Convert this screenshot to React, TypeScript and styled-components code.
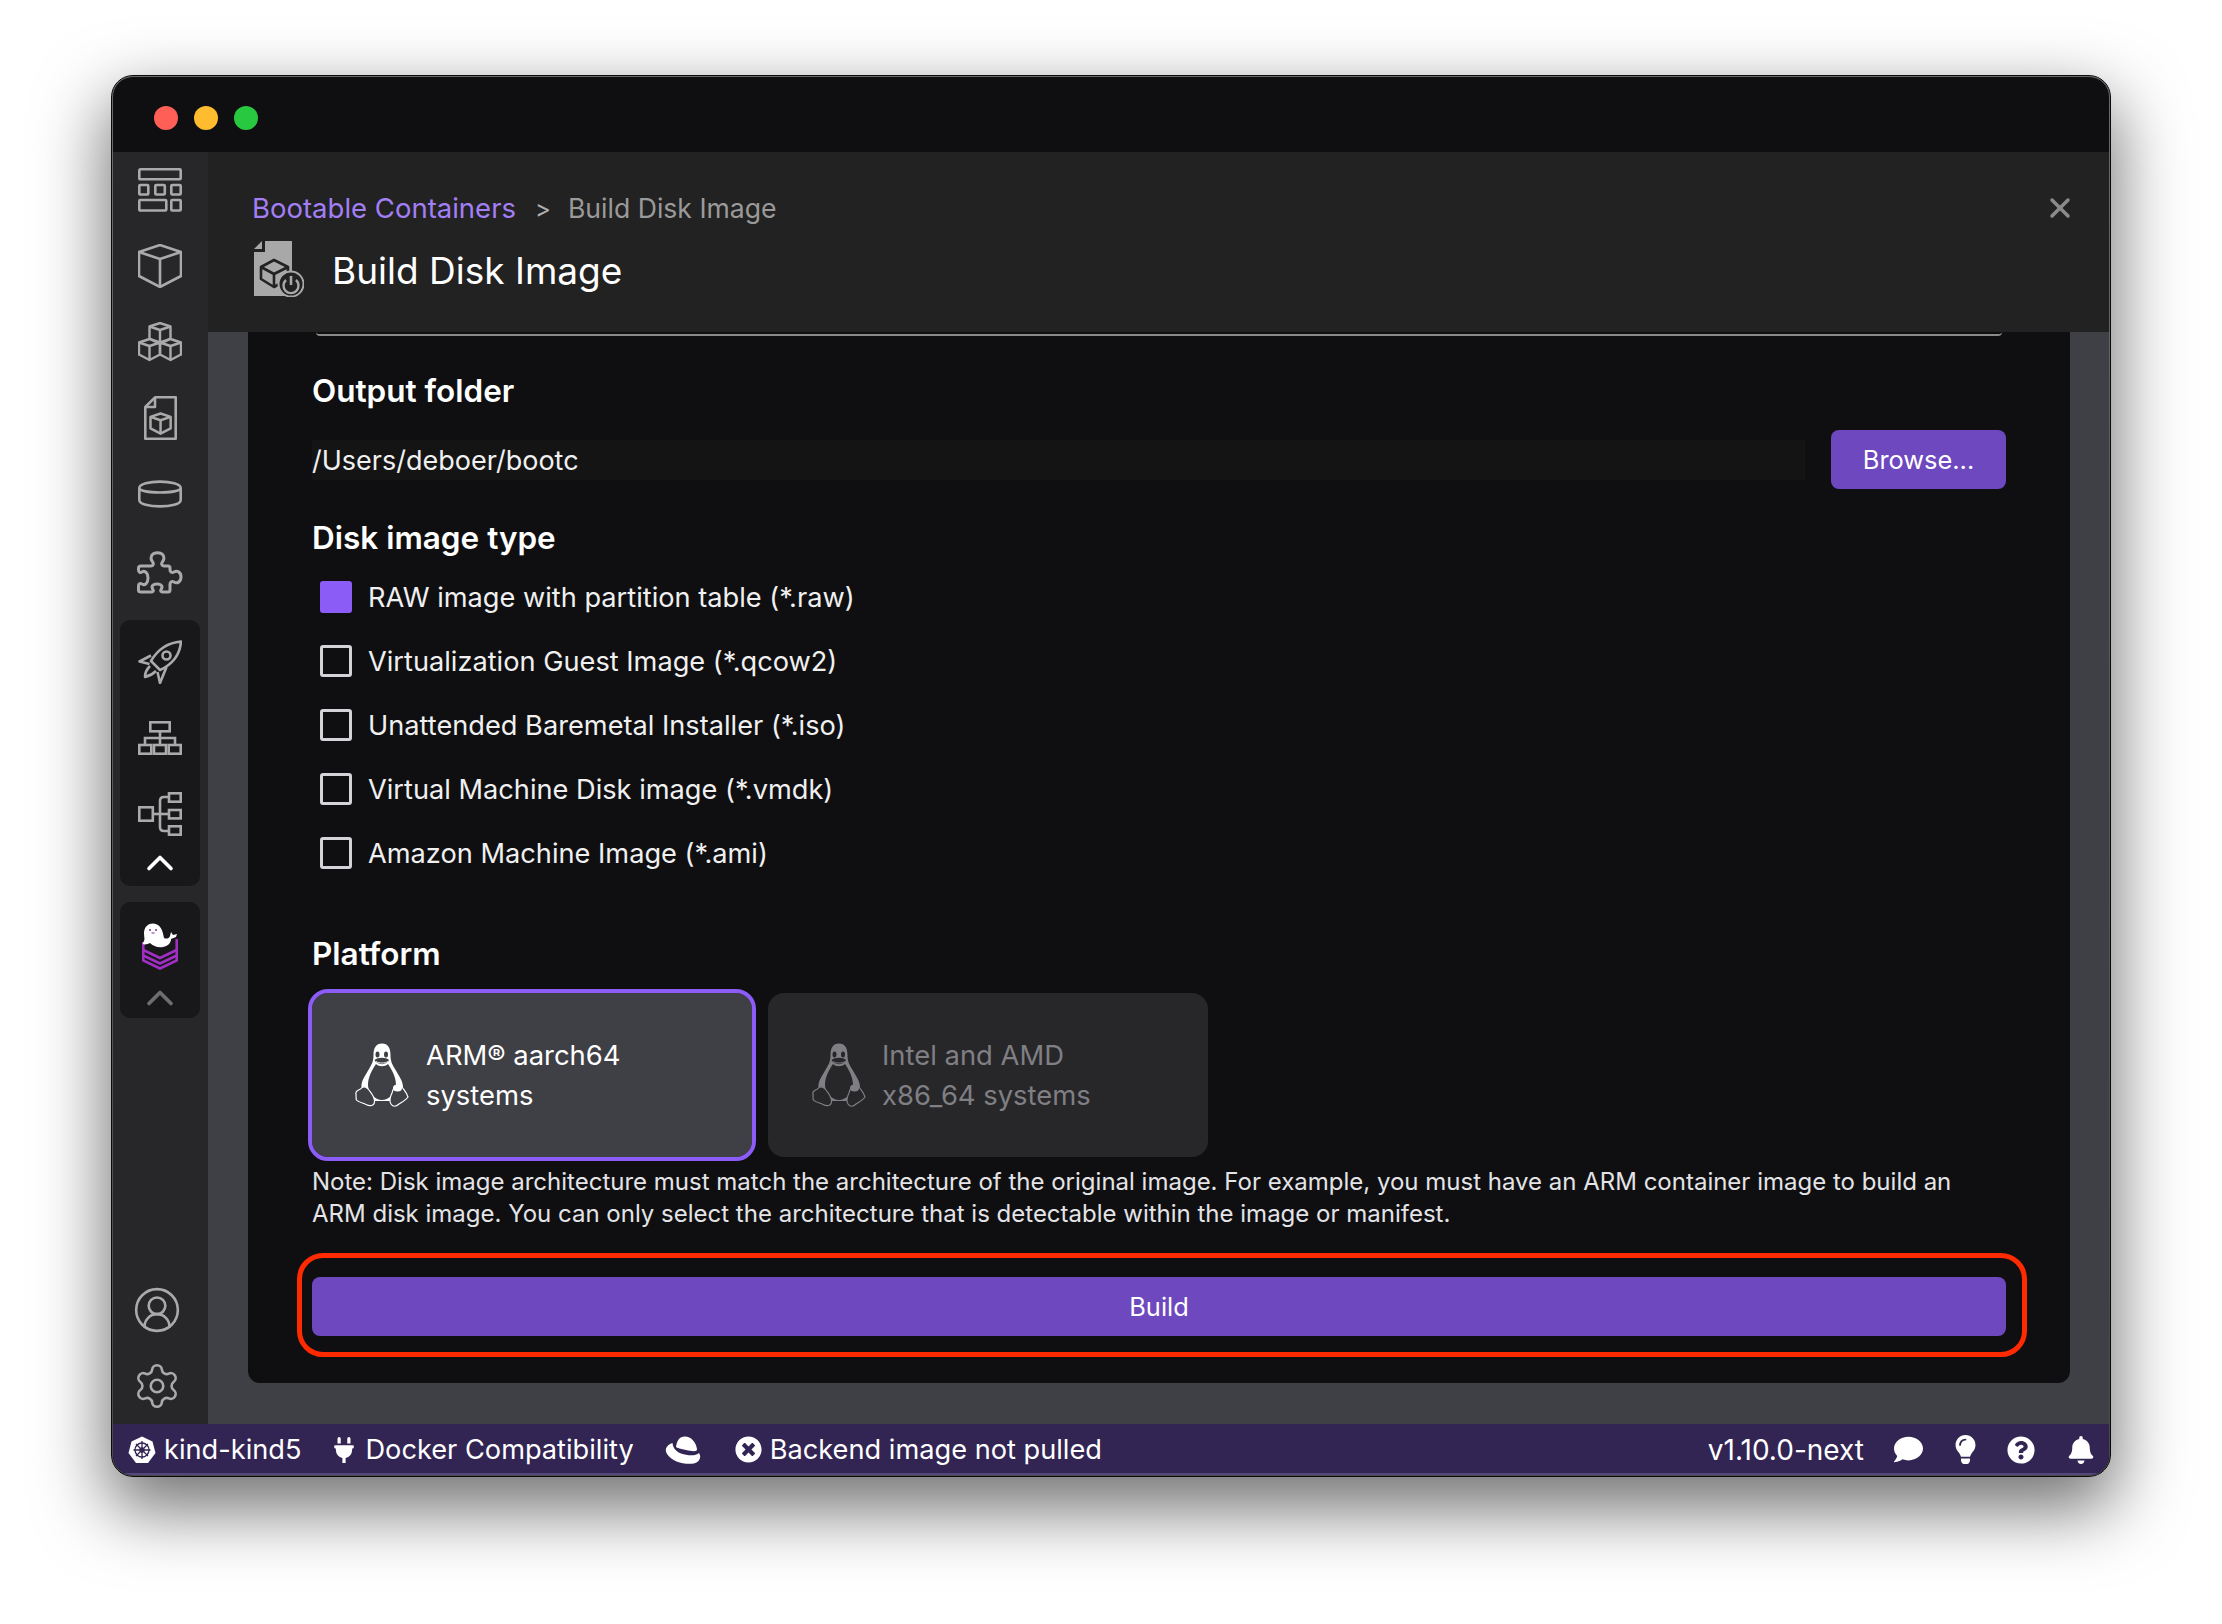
import React from "react";
import styled, { createGlobalStyle } from "styled-components";
import { Settings, CircleUserRound, ChevronUp, X } from "lucide-react";
import { FaBell, FaComment, FaLightbulb, FaPlug, FaQuestionCircle, FaTimesCircle } from "react-icons/fa";

const GlobalStyle = createGlobalStyle`
  html, body {
    margin: 0;
    background: #fff;
    font-family: Inter, "Noto Sans", sans-serif;
  }
  body {
    width: 2222px;
    height: 1624px;
    overflow: hidden;
  }
  * { box-sizing: border-box; }
`;

const Page = styled.div`
  padding: 75px 0 0 111px;
`;

const Window = styled.div`
  width: 2000px;
  height: 1402px;
  padding: 1px;
  border: 1px solid #0a0a0a;
  border-radius: 22px;
  background: linear-gradient(#6a6a6a, #4a4a4a);
  box-shadow: 0 28px 70px 4px rgba(0, 0, 0, 0.56);
`;

const WindowInner = styled.div`
  height: 100%;
  display: flex;
  flex-direction: column;
  overflow: hidden;
  border-radius: 20px;
  background: #0f0f11;
`;

const TitleBar = styled.div`
  flex: none;
  height: 75px;
  padding: 29px 0 0 41px;
  display: flex;
  gap: 16px;
`;

const Light = styled.span<{ $color: string }>`
  width: 24px;
  height: 24px;
  border-radius: 50%;
  background: ${(p) => p.$color};
`;

const Main = styled.div`
  flex: 1;
  min-height: 0;
  display: flex;
`;

const Sidebar = styled.nav`
  flex: none;
  width: 95px;
  padding-right: 1px;
  display: flex;
  flex-direction: column;
  align-items: center;
  background: #27272a;
`;

const NavItem = styled.div<{ $h?: number }>`
  flex: none;
  width: 100%;
  height: ${(p) => p.$h ?? 76}px;
  display: flex;
  align-items: center;
  justify-content: center;
  color: #aaaaaa;
`;

const NavGroup = styled.div<{ $top: number; $bottom: number }>`
  flex: none;
  width: 80px;
  margin-top: ${(p) => p.$top}px;
  padding-bottom: ${(p) => p.$bottom}px;
  border-radius: 10px;
  background: #18181b;
  display: flex;
  flex-direction: column;
  align-items: center;
`;

const NavBottom = styled.div`
  margin-top: auto;
  width: 100%;
  margin-left: -6px;
`;

const Column = styled.div`
  flex: 1;
  min-width: 0;
  display: flex;
  flex-direction: column;
  background: #3f3f46;
`;

const Header = styled.header`
  flex: none;
  height: 180px;
  padding: 36px 33px 0 44px;
  background: #222222;
`;

const CrumbRow = styled.div`
  display: flex;
  align-items: center;
  height: 40px;
  font-size: 26.6px;
  color: #9a9a9a;
`;

const CrumbLink = styled.span`
  font-size: 27.5px;
  color: #a27ff5;
`;

const CrumbSep = styled.span`
  margin: 0 17px 0 19px;
  color: #b0b0b0;
  font-size: 24px;
`;

const CloseButton = styled.span`
  margin-left: auto;
  display: flex;
  color: #8a8a8a;
`;

const TitleRow = styled.div`
  margin-top: 13px;
  display: flex;
  align-items: center;
  gap: 28px;
  margin-left: 2px;
`;

const Title = styled.h1`
  margin: 4px 0 0;
  font-size: 37px;
  font-weight: 400;
  line-height: 52px;
  color: #fff;
`;

const ContentWrap = styled.div`
  flex: 1;
  min-height: 0;
  padding: 0 39px 41px 40px;
`;

const Panel = styled.section`
  height: 100%;
  padding: 0 64px;
  background: #0f0f11;
  border-radius: 0 0 12px 12px;
  overflow: hidden;
`;

const PrevFieldEdge = styled.div`
  height: 4px;
  margin: 0 4px;
  border-bottom: 2px solid #8a8a8a;
  border-radius: 0 0 14px 14px;
`;

const SectionLabel = styled.h2<{ $top: number }>`
  margin: ${(p) => p.$top}px 0 0;
  font-size: 31.5px;
  font-weight: 600;
  line-height: 32px;
  color: #fff;
`;

const FolderRow = styled.div`
  margin-top: 23px;
  display: flex;
  align-items: center;
  gap: 26px;
`;

const FolderInput = styled.div`
  flex: 1;
  height: 40px;
  font-size: 27px;
  line-height: 41px;
  color: #f0f0f0;
  background: #141414;
`;

const PurpleButton = styled.button<{ $wide?: boolean }>`
  width: ${(p) => (p.$wide ? "100%" : "175px")};
  height: 59px;
  border: 0;
  border-radius: 8px;
  background: #6d48bf;
  color: #fff;
  font-family: inherit;
  font-size: 25.4px;
`;

const CheckList = styled.div`
  margin-top: 11px;
`;

const CheckRow = styled.label`
  height: 64px;
  padding-left: 8px;
  display: flex;
  align-items: center;
  gap: 16px;
  font-size: 27.2px;
  color: #f0f0f0;
`;

const CheckBox = styled.span<{ $on?: boolean }>`
  width: 32px;
  height: 32px;
  border-radius: 3px;
  background: ${(p) => (p.$on ? "#8b5cf6" : "transparent")};
  border: ${(p) => (p.$on ? "0" : "3px solid #d4d4d8")};
`;

const Cards = styled.div`
  margin-top: 23px;
  display: flex;
  gap: 16px;
`;

const Card = styled.div<{ $on?: boolean }>`
  width: 440px;
  height: 164px;
  padding-left: ${(p) => (p.$on ? 43 : 44)}px;
  display: flex;
  align-items: center;
  gap: ${(p) => (p.$on ? 17 : 16)}px;
  border-radius: 16px;
  background: ${(p) => (p.$on ? "#3f3f46" : "#27272a")};
  color: ${(p) => (p.$on ? "#ffffff" : "#7f7f84")};
  outline: ${(p) => (p.$on ? "4px solid #8b5cf6" : "none")};
`;

const CardLabel = styled.div`
  font-size: 27.4px;
  line-height: 40px;
`;

const Note = styled.p`
  margin: 9px 0 0;
  font-size: 24px;
  line-height: 32px;
  color: #e4e4e7;
`;

const HighlightFrame = styled.div`
  margin: 23px -21px 0 -15px;
  padding: 19px 16px 16px 10px;
  border: 5px solid #ff2a00;
  border-radius: 26px;
`;

const StatusBar = styled.footer`
  flex: none;
  height: 51px;
  padding: 2px 14px 0 15px;
  display: flex;
  align-items: center;
  gap: 30px;
  background: #322453;
  border-bottom: 2px solid #56477a;
  color: #fff;
  font-size: 27.2px;
`;

const StatusItem = styled.span<{ $gap?: number; $before?: number }>`
  display: flex;
  align-items: center;
  gap: ${(p) => p.$gap ?? 8}px;
  margin-left: ${(p) => p.$before ?? 0}px;
`;

const StatusSpacer = styled.span`
  flex: 1;
`;

const VersionLabel = styled.span`
  font-size: 28px;
`;

const StatusIcons = styled.span`
  display: flex;
  align-items: center;
  gap: 32px;
  margin-left: 0;
`;

const BulbIcon = styled(FaLightbulb)`
  margin: 0 -5px 0 -4px;
`;

const CubeShape = () => (
  <>
    <path d="M22 1 L43 8 V32 L22 43 L1 32 V8 Z" />
    <path d="M1 8 L22 15 L43 8 M22 15 V43" />
  </>
);

const DashboardIcon = () => (
  <svg width="44" height="44" viewBox="0 0 44 44" fill="none" stroke="currentColor" strokeWidth="2.6">
    <rect x="1.3" y="1.3" width="41.4" height="10" rx="1" />
    <rect x="1.3" y="17" width="9" height="9.5" rx="1" />
    <rect x="17.3" y="17" width="9.5" height="9.5" rx="1" />
    <rect x="33.3" y="17" width="9.4" height="9.5" rx="1" />
    <rect x="1.3" y="32" width="27" height="10.5" rx="1" />
    <rect x="33.3" y="32" width="9.4" height="10.5" rx="1" />
  </svg>
);

const CubeIcon = () => (
  <svg width="44" height="44" viewBox="0 0 44 44" fill="none" stroke="currentColor" strokeWidth="2.6" strokeLinejoin="round">
    <CubeShape />
  </svg>
);

const PodsIcon = () => (
  <svg width="44" height="40" viewBox="0 0 44 40" fill="none" stroke="currentColor" strokeWidth="2.4" strokeLinejoin="round">
    <g transform="translate(11 0.5) scale(0.5)" strokeWidth="4.8"><CubeShape /></g>
    <g transform="translate(0.5 16.5) scale(0.5)" strokeWidth="4.8"><CubeShape /></g>
    <g transform="translate(21.5 16.5) scale(0.5)" strokeWidth="4.8"><CubeShape /></g>
  </svg>
);

const ImageFileIcon = () => (
  <svg width="33" height="44" viewBox="0 0 33 44" fill="none" stroke="currentColor" strokeWidth="2.6" strokeLinejoin="round">
    <path d="M11 1.3 H31.7 V42.7 H1.3 V11 Z" />
    <path d="M11 1.3 V11 H1.3" />
    <g transform="translate(6 17) scale(0.48)" strokeWidth="5.2"><CubeShape /></g>
  </svg>
);

const VolumeIcon = () => (
  <svg width="44" height="28" viewBox="0 0 44 28" fill="none" stroke="currentColor" strokeWidth="2.6">
    <path d="M1.3 8 C1.3 -0.5 42.7 -0.5 42.7 8 V20 C42.7 28.5 1.3 28.5 1.3 20 Z" />
    <path d="M1.3 8 C1.3 14 42.7 14 42.7 8" />
  </svg>
);

const PuzzleIcon = () => (
  <svg width="46" height="44" viewBox="0 0 46 44" fill="none" stroke="currentColor" strokeWidth="3" strokeLinejoin="round">
    <path d="M14 16 C16 16 17 14 16 12.5 C14 10 13 8 15 5 C17 2 24 2 26 5 C28 8 27 10 25 12.5 C24 14 25 16 27 16 H31 Q33 16 33 18 V20 C33 22 35 23 37 22 C40 20 44 22 44 27 C44 32 40 34 37 32 C35 31 33 32 33 34 V40 Q33 42 31 42 H26 C24 42 23 41 24 39.5 C26 37 25 34 20 34 C15 34 14 37 16 39.5 C17 41 16 42 14 42 H4 Q1.5 42 1.5 40 V36 C1.5 34 3 33 5 34 C8 36 11 33 11 28 C11 23 8 20 5 22 C3 23 1.5 22 1.5 20 V18 Q1.5 16 4 16 Z" />
  </svg>
);

const RocketIcon = () => (
  <svg width="44" height="44" viewBox="0 0 44 44" fill="none" stroke="currentColor" strokeWidth="2.6" strokeLinejoin="round">
    <path d="M43 1.5 C31 2.5 20 9 13 21 L22 30 C35 24 42 14 43 1.5 Z" />
    <circle cx="28.5" cy="15.5" r="4" />
    <path d="M13 15.5 L1.5 21.5 L11.5 24" />
    <path d="M28.5 27 L22 43 L19.5 32" />
    <path d="M12 26 C9 29 7 32 7 37 C11 36 14 35 18 31" />
  </svg>
);

const OrgIcon = () => (
  <svg width="44" height="34" viewBox="0 0 44 34" fill="none" stroke="currentColor" strokeWidth="2.6">
    <rect x="12.3" y="1.3" width="19.4" height="9" />
    <path d="M22 10 V17 M7 24 V17 H37 V24 M22 17 V24" />
    <rect x="1.3" y="24" width="12" height="8.7" />
    <rect x="16" y="24" width="12" height="8.7" />
    <rect x="30.7" y="24" width="12" height="8.7" />
  </svg>
);

const TreeIcon = () => (
  <svg width="44" height="44" viewBox="0 0 44 44" fill="none" stroke="currentColor" strokeWidth="2.6">
    <rect x="1.3" y="15.3" width="13.5" height="13.4" />
    <rect x="31" y="1.3" width="11.7" height="8.4" />
    <rect x="31" y="18" width="11.7" height="8.4" />
    <rect x="31" y="34.3" width="11.7" height="8.4" />
    <path d="M14.8 22 H31" />
    <path d="M31 5 H26 C23 5 22 7 22 9 V35 C22 37 23 39 26 39 H31" />
  </svg>
);

const SealStackIcon = () => (
  <svg width="36" height="48" viewBox="0 0 36 48" fill="none">
    <g stroke="#a12fc4" strokeWidth="2.6" strokeLinejoin="miter">
      <path d="M1.3 20 V38.5 L18 46.5 L34.7 38.5 V17" />
      <path d="M1.3 28 L18 36 L34.7 28" />
      <path d="M1.3 33.5 L18 41.5 L34.7 33.5" />
    </g>
    <path
      d="M11 1.5 C5 1.5 2 6 2 11 C2 15 3 17 2 19 L0.5 22 C3 23 6 22 8 21 C11 24 16 26 21 25 C26 24 29 21 29 17 L34 15 L35 12 L31 13 L29 10 L28 14 C27 17 24 17 22 16 C21 10 19 1.5 11 1.5 Z"
      fill="#fff"
    />
    <circle cx="8" cy="8" r="1" fill="#7a2a96" />
    <circle cx="14" cy="8" r="1" fill="#7a2a96" />
    <path d="M9.5 11 H12.5" stroke="#7a2a96" strokeWidth="1" />
  </svg>
);

const DiskBuildIcon = () => (
  <svg width="50" height="56" viewBox="0 0 50 56">
    <path d="M11 0 H38 V55 H0 V11 H11 Z" fill="#a8a8a8" />
    <path d="M0 8 L8 0 V8 Z" fill="#a8a8a8" />
    <g fill="none" stroke="#222" strokeWidth="2.6" strokeLinejoin="round">
      <path d="M20 19 L34 26 V38 L20 46 L7 38 V26 Z" />
      <path d="M7 26 L20 33 L34 26 M20 33 V46" />
    </g>
    <circle cx="37" cy="43" r="12.5" fill="#222" stroke="#a8a8a8" strokeWidth="2" />
    <path d="M32 39 A7.5 7.5 0 1 0 42 39" fill="none" stroke="#a8a8a8" strokeWidth="2.4" />
    <path d="M37 35 V44" stroke="#a8a8a8" strokeWidth="2.6" />
  </svg>
);

const TuxIcon = ({ bg }: { bg: string }) => (
  <svg width="54" height="64" viewBox="0 0 54 64">
    <path
      d="M27 0.5 C21 0.5 18.5 5 18.5 12 C18.5 18 17 21 14 26 C10 33 6 38 6.5 44 L16 58 H38 L48 44 C48 38 44 33 40 26 C37 21 35.5 18 35.5 12 C35.5 5 33 0.5 27 0.5 Z"
      fill="currentColor"
    />
    <path
      d="M21 21 C17 27 13 34 13 42 C13 50 20 57 27 57 C34 57 41 50 41 42 C41 34 37 27 33 21 C30 24 24 24 21 21 Z"
      fill={bg}
    />
    <ellipse cx="22.5" cy="11.5" rx="2" ry="3" fill={bg} />
    <ellipse cx="31" cy="11.5" rx="2" ry="3" fill={bg} />
    <path d="M19.5 17 C23 14 31 14 34 17 C32 22.5 22 22.5 19.5 17 Z" fill={bg} />
    <path d="M21 18.5 C24 20.5 30 20.5 33 18.5" fill="none" stroke="currentColor" strokeWidth="0.9" />
    <path
      d="M7 44.5 C9 43 12 44 14 47 C17 51 20 54 19.5 59 C19 63 15 63.5 11 61.5 C8 60 3 59 1.5 57 C0.5 55 1.5 52 0.8 50 C1 47 5 47.5 7 44.5 Z"
      fill={bg}
      stroke="currentColor"
      strokeWidth="1.2"
    />
    <path
      d="M42 42 C39 43 38 46 37 50 C35 54 34 58 36 61 C38 64 41 64 44 61 C47 59 51 57 53 54 C52 50 49 47 47 44 C46 42 44 41 42 42 Z"
      fill={bg}
      stroke="currentColor"
      strokeWidth="1.2"
    />
    <ellipse cx="42.5" cy="45" rx="4.5" ry="3.5" fill="currentColor" />
  </svg>
);

const KubeIcon = () => (
  <svg width="28" height="28" viewBox="0 0 28 28">
    <path d="M14 0.5 L24.5 5.5 L27.5 17 L20 27 H8 L0.5 17 L3.5 5.5 Z" fill="#fff" />
    <g fill="none" stroke="#322453" strokeWidth="1.3">
      <circle cx="14" cy="14" r="7" />
      <circle cx="14" cy="14" r="2" />
      <path d="M14 5 V23 M5.5 14 H22.5 M8 8 L20 20 M20 8 L8 20" />
    </g>
  </svg>
);

const RedHatIcon = () => (
  <svg width="37" height="28" viewBox="0 0 37 28" fill="#fff">
    <path d="M12 11 C13 5 15 0.5 21 0.5 C27 0.5 32 6 33 13 C33.5 16 28 15.5 22 14 C17 13 13 12 12 11 Z" />
    <path d="M8.5 7 C3 9 0 13 3 18 C8 26 21 29 30 27.5 C35 26.5 38 21 35 17 C32 20 24 20 17 17.5 C12 15.5 9 12 8.5 7 Z" />
  </svg>
);

const platforms = [
  { on: true, lines: ["ARM® aarch64", "systems"] },
  { on: false, lines: ["Intel and AMD", "x86_64 systems"] },
];

const diskTypes = [
  "RAW image with partition table (*.raw)",
  "Virtualization Guest Image (*.qcow2)",
  "Unattended Baremetal Installer (*.iso)",
  "Virtual Machine Disk image (*.vmdk)",
  "Amazon Machine Image (*.ami)",
];

export default function App() {
  return (
    <Page>
      <GlobalStyle />
      <Window>
        <WindowInner>
          <TitleBar>
            <Light $color="#ff5f57" />
            <Light $color="#febc2e" />
            <Light $color="#28c840" />
          </TitleBar>
          <Main>
            <Sidebar>
              <NavItem><DashboardIcon /></NavItem>
              <NavItem><CubeIcon /></NavItem>
              <NavItem><PodsIcon /></NavItem>
              <NavItem><ImageFileIcon /></NavItem>
              <NavItem><VolumeIcon /></NavItem>
              <NavItem $h={80}><PuzzleIcon /></NavItem>
              <NavGroup $top={8} $bottom={16}>
                <NavItem $h={84}><RocketIcon /></NavItem>
                <NavItem $h={68}><OrgIcon /></NavItem>
                <NavItem $h={84}><TreeIcon /></NavItem>
                <NavItem $h={14}><ChevronUp size={44} color="#fff" strokeWidth={2} /></NavItem>
              </NavGroup>
              <NavGroup $top={16} $bottom={12}>
                <NavItem $h={88}><SealStackIcon /></NavItem>
                <NavItem $h={16}><ChevronUp size={44} color="#6e6e6e" strokeWidth={2} /></NavItem>
              </NavGroup>
              <NavBottom>
                <NavItem><CircleUserRound size={50} strokeWidth={1.25} /></NavItem>
                <NavItem><Settings size={50} strokeWidth={1.25} /></NavItem>
              </NavBottom>
            </Sidebar>
            <Column>
              <Header>
                <CrumbRow>
                  <CrumbLink>Bootable Containers</CrumbLink>
                  <CrumbSep>&gt;</CrumbSep>
                  <span>Build Disk Image</span>
                  <CloseButton><X size={32} strokeWidth={2.6} /></CloseButton>
                </CrumbRow>
                <TitleRow>
                  <DiskBuildIcon />
                  <Title>Build Disk Image</Title>
                </TitleRow>
              </Header>
              <ContentWrap>
                <Panel>
                  <PrevFieldEdge />
                  <SectionLabel $top={39}>Output folder</SectionLabel>
                  <FolderRow>
                    <FolderInput>/Users/deboer/bootc</FolderInput>
                    <PurpleButton>Browse...</PurpleButton>
                  </FolderRow>
                  <SectionLabel $top={33}>Disk image type</SectionLabel>
                  <CheckList>
                    {diskTypes.map((label, i) => (
                      <CheckRow key={label}>
                        <CheckBox $on={i === 0} />
                        {label}
                      </CheckRow>
                    ))}
                  </CheckList>
                  <SectionLabel $top={53}>Platform</SectionLabel>
                  <Cards>
                    {platforms.map((p) => (
                      <Card key={p.lines[0]} $on={p.on}>
                        <TuxIcon bg={p.on ? "#3f3f46" : "#27272a"} />
                        <CardLabel>
                          {p.lines[0]}
                          <br />
                          {p.lines[1]}
                        </CardLabel>
                      </Card>
                    ))}
                  </Cards>
                  <Note>
                    Note: Disk image architecture must match the architecture of the original image. For example, you must have an ARM container image to build an
                    <br />
                    ARM disk image. You can only select the architecture that is detectable within the image or manifest.
                  </Note>
                  <HighlightFrame>
                    <PurpleButton $wide>Build</PurpleButton>
                  </HighlightFrame>
                </Panel>
              </ContentWrap>
            </Column>
          </Main>
          <StatusBar>
            <StatusItem><KubeIcon />kind-kind5</StatusItem>
            <StatusItem><FaPlug size={26} />Docker Compatibility</StatusItem>
            <StatusItem><RedHatIcon /></StatusItem>
            <StatusItem $gap={8} $before={4}><FaTimesCircle size={27} />Backend image not pulled</StatusItem>
            <StatusSpacer />
            <VersionLabel>v1.10.0-next</VersionLabel>
            <StatusIcons>
              <FaComment size={29} />
              <BulbIcon size={29} />
              <FaQuestionCircle size={28} />
              <FaBell size={28} />
            </StatusIcons>
          </StatusBar>
        </WindowInner>
      </Window>
    </Page>
  );
}
